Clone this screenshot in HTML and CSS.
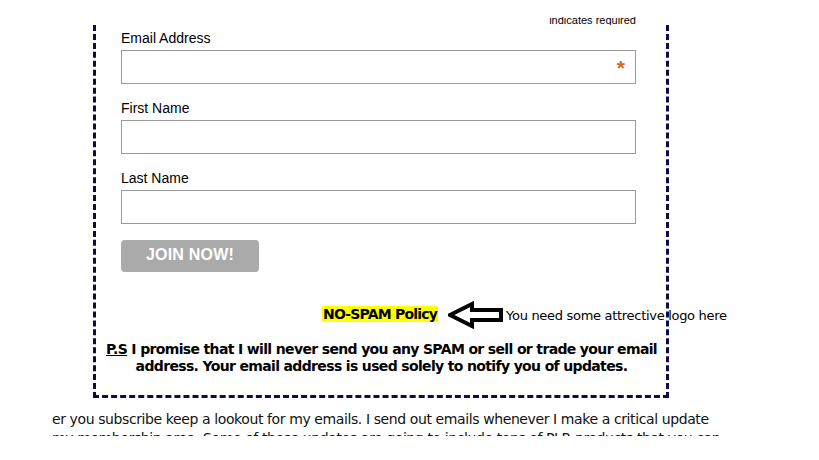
FILE: index.html
```html
<!DOCTYPE html>
<html lang="en">
<head>
  <meta charset="UTF-8" />
  <title>Subscribe</title>
  <link rel="stylesheet" href="styles.css">
</head>
<body>

  <div class="page">
    <div class="req-clip">
      <div class="req">indicates required</div>
    </div>

    <form class="signup">
      <div class="field">
        <label for="email">Email Address</label>
        <div class="input-wrap">
          <input type="email" id="email">
          <span class="asterisk">*</span>
        </div>
      </div>
      <div class="field">
        <label for="fname">First Name</label>
        <input type="text" id="fname">
      </div>
      <div class="field">
        <label for="lname">Last Name</label>
        <input type="text" id="lname">
      </div>

      <button type="button" class="join">JOIN NOW!</button>

      <div class="spam-row">
        <span class="spam">NO-SPAM Policy</span>
        <svg class="arrow" width="56" height="28" viewBox="0 0 56 28">
          <polygon points="2,14 24,3 24,9 53,9 53,19 24,19 24,25" fill="#fff" stroke="#000" stroke-width="4" stroke-linejoin="miter"/>
        </svg>
        <span class="logo-note">You need some attrective logo here</span>
      </div>

      <p class="ps"><u>P.S</u> I promise that I will never send you any SPAM or sell or trade your email<br>
      address. Your email address is used solely to notify you of updates.</p>
    </form>
  </div>

  <div class="more">
    <p>er you subscribe keep a lookout for my emails. I send out emails whenever I make a critical update<br>
    my membership area. Some of these updates are going to include tons of PLR products that you can</p>
  </div>

</body>
</html>
```

FILE: styles.css
```css
body {
  margin: 0;
  font-family: 'Liberation Sans', Arial, sans-serif;
  background: white;
  color: #000;
}

.page {
  margin-left: 93px;
  width: 576px;
}

.req-clip {
  height: 8px;
  margin-top: 17px;
  overflow: hidden;
  padding-right: 33px;
}

.req {
  margin-top: -3px;
  text-align: right;
  font-size: 11px;
  line-height: 13px;
}

.signup {
  border: 3px dashed #0f0b45;
  border-top: none;
  padding: 5px 30px 20px 25px;
}

.field {
  margin-bottom: 16px;
}

.field label {
  display: block;
  font-size: 14px;
  line-height: 16px;
  margin-bottom: 4px;
}

.field input {
  display: block;
  box-sizing: border-box;
  width: 515px;
  height: 34px;
  margin: 0;
  border: 1px solid #999;
  font-size: 14px;
  outline: none;
}

.input-wrap {
  position: relative;
}

.asterisk {
  position: absolute;
  right: 11px;
  top: 6px;
  color: #d2691e;
  font-size: 21px;
  font-weight: bold;
  line-height: 24px;
}

.join {
  display: block;
  width: 138px;
  height: 32px;
  padding: 0 0 3px;
  border: none;
  border-radius: 4px;
  background: #aaa;
  color: white;
  font-family: 'Liberation Sans', Arial, sans-serif;
  font-size: 16px;
  font-weight: bold;
  line-height: 28px;
  letter-spacing: 0.2px;
}

.spam-row {
  display: flex;
  align-items: center;
  height: 28px;
  margin-top: 29px;
  padding-left: 201px;
  white-space: nowrap;
  font-family: 'DejaVu Sans', Verdana, sans-serif;
}

.spam {
  background: yellow;
  font-size: 14px;
  font-weight: bold;
  line-height: 16px;
  letter-spacing: -0.8px;
  padding: 0 1px;
  margin-top: -2px;
}

.arrow {
  margin-left: 10px;
  flex: none;
}

.logo-note {
  font-size: 13px;
  letter-spacing: -0.3px;
  margin-left: 2px;
}

.ps {
  margin: 12px -26px 0 -20px;
  text-align: center;
  white-space: nowrap;
  font-family: 'DejaVu Sans', Verdana, sans-serif;
  font-size: 14px;
  font-weight: bold;
  line-height: 17px;
  letter-spacing: -0.65px;
}

.more {
  height: 26px;
  margin-top: 12px;
  overflow: hidden;
  padding-left: 52px;
}

.more p {
  margin: 0;
  font-family: 'DejaVu Sans', Verdana, sans-serif;
  font-size: 14px;
  line-height: 19px;
  letter-spacing: -0.4px;
  color: #111;
  white-space: nowrap;
}
```
